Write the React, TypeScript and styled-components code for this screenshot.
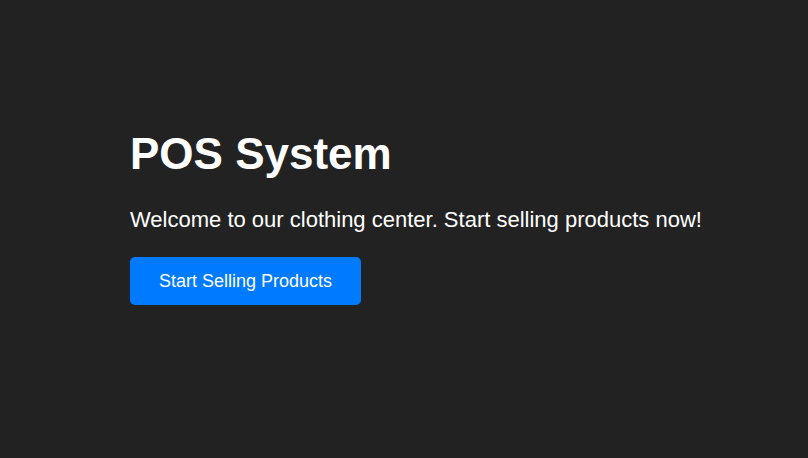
import React from "react";
import styled, { createGlobalStyle } from "styled-components";

const GlobalStyle = createGlobalStyle`
  html, body {
    margin: 0;
    padding: 0;
    background: #222222;
  }
  body {
    font-family: "Liberation Sans", Arial, sans-serif;
  }
`;

const Page = styled.main`
  box-sizing: border-box;
  min-height: 100vh;
  display: flex;
  flex-direction: column;
  justify-content: center;
  align-items: flex-start;
  padding: 0 40px 25px 130px;
  background: #222222;
  color: #ffffff;
`;

const Title = styled.h1`
  margin: 0 0 26px;
  font-size: 44px;
  font-weight: 700;
  line-height: 1.2;
`;

const Lead = styled.p`
  margin: 0 0 23px;
  font-size: 22px;
  line-height: 1.2;
`;

const PrimaryButton = styled.button`
  border: none;
  border-radius: 5px;
  background: #007bff;
  color: #ffffff;
  font-family: inherit;
  font-size: 18px;
  line-height: 22px;
  padding: 13px 29px;
  cursor: pointer;
`;

export default function App() {
  return (
    <>
      <GlobalStyle />
      <Page>
        <Title>POS System</Title>
        <Lead>Welcome to our clothing center. Start selling products now!</Lead>
        <PrimaryButton>Start Selling Products</PrimaryButton>
      </Page>
    </>
  );
}
